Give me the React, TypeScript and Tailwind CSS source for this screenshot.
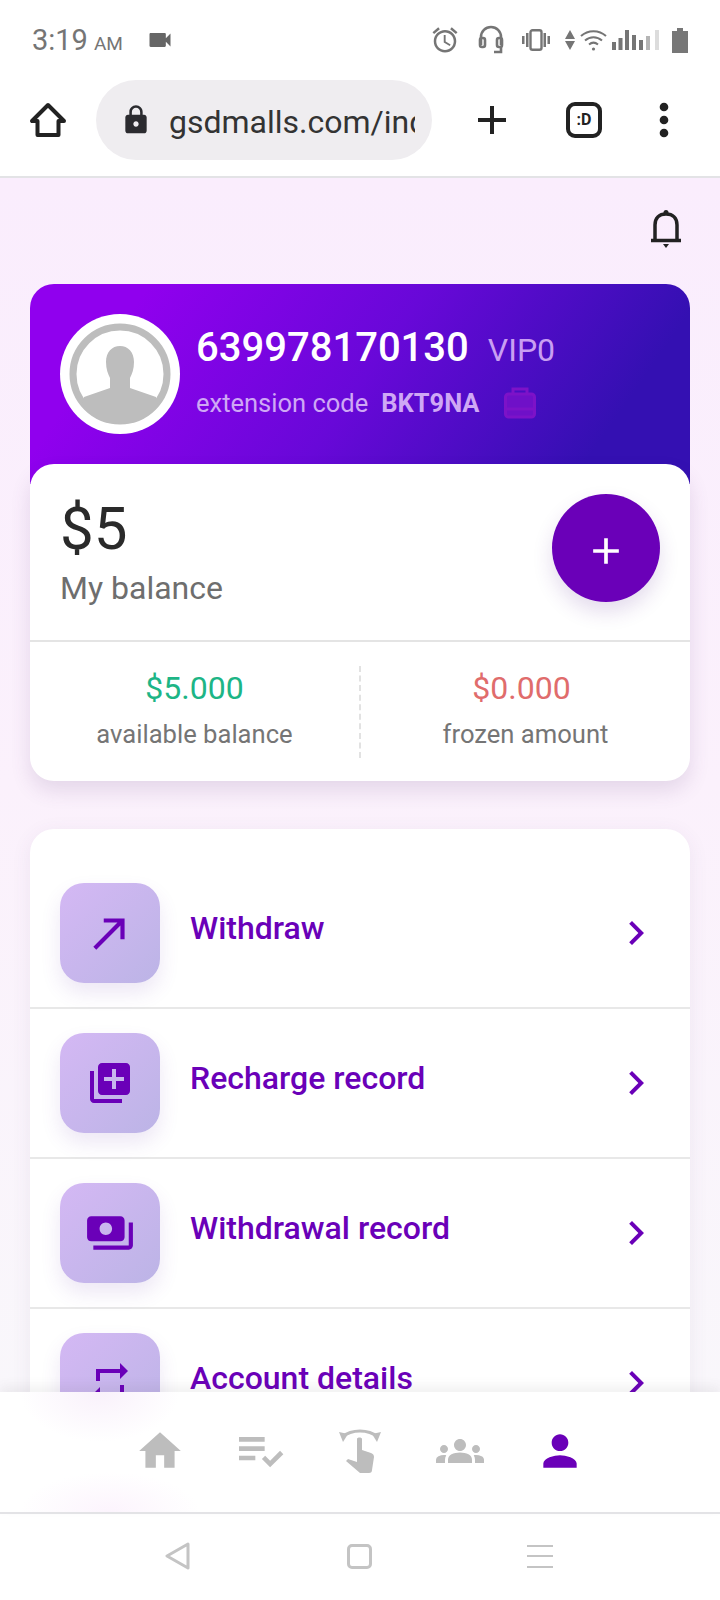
import React from "react";
import { MdNorthEast, MdLibraryAdd, MdPayments, MdRepeat, MdHome, MdPlaylistAddCheck, MdGroups, MdPerson, MdAccessAlarm, MdVideocam, MdLock, MdAdd, MdMoreVert, MdChevronRight } from "react-icons/md";

function Row({ label, icon, first }: { label: string; icon: React.ReactNode; first?: boolean }) {
  return (
    <div className={`flex items-center border-b-2 border-[#e8e8e8] pb-[24px] pl-[30px] pr-[30px] ${first ? "pt-[54px]" : "pt-[24px]"}`}>
      <div className="flex h-[100px] w-[100px] shrink-0 items-center justify-center rounded-[24px] bg-gradient-to-br from-[#d4b8f4] to-[#bcb4e6] text-[#6a00b8] shadow-[0_10px_20px_rgba(110,60,170,0.12)]">
        {icon}
      </div>
      <div className="ml-[30px] flex-1 pb-[10px] text-[32px] font-medium leading-[40px] text-[#6a00b8]">{label}</div>
      <MdChevronRight size={48} className="text-[#6a00b8]" />
    </div>
  );
}

export default function App() {
  return (
    <div className="flex h-[1600px] w-[720px] flex-col overflow-hidden bg-white font-['Roboto',sans-serif]">
      {/* status bar */}
      <div className="flex h-[78px] shrink-0 items-center pl-[32px] pr-[32px] pt-[2px] text-[#757575]">
        <span className="text-[29px] leading-none">3:19</span>
        <span className="ml-[6px] mt-[6px] text-[19px] leading-none">AM</span>
        <MdVideocam size={28} className="ml-[23px] text-[#666]" />
        <div className="ml-auto flex items-center">
          <MdAccessAlarm size={30} />
          <svg width="26" height="30" viewBox="0 0 26 30" className="ml-[18px]" fill="none" stroke="currentColor" strokeWidth="2.6">
            <path d="M3 20V12a10 10 0 0 1 20 0v8" />
            <rect x="2" y="13" width="5" height="9" rx="2" />
            <rect x="19" y="13" width="5" height="9" rx="2" />
            <path d="M23 22v5h-7" />
          </svg>
          <svg width="28" height="22" viewBox="0 0 28 22" className="ml-[18px]" fill="currentColor">
            <rect x="0" y="7" width="2.5" height="8" />
            <rect x="4" y="4" width="2.5" height="14" />
            <rect x="8.5" y="1.2" width="11" height="19.6" rx="2" fill="none" stroke="currentColor" strokeWidth="2.4" />
            <rect x="21.5" y="4" width="2.5" height="14" />
            <rect x="25.5" y="7" width="2.5" height="8" />
          </svg>
          <svg width="10" height="20" viewBox="0 0 10 20" className="ml-[15px]" fill="currentColor">
            <path d="M5 0l5 9H0zM0 11h10l-5 9z" />
          </svg>
          <svg width="27" height="22" viewBox="0 0 27 22" className="ml-[5px]" fill="none" stroke="currentColor" strokeWidth="2">
            <path d="M1 7c7-6.500 18-6.500 25 0M5 11.500c5-4.500 12-4.500 17 0M9 15.500c3-2.500 6-2.500 9 0" />
            <circle cx="13.500" cy="20" r="1.600" fill="currentColor" stroke="none" />
          </svg>
          <svg width="48" height="22" viewBox="0 0 48 22" className="ml-[5px]">
            <rect x="0" y="13" width="4" height="8" fill="#757575" />
            <rect x="6.500" y="9" width="4" height="12" fill="#757575" />
            <rect x="13" y="1" width="4" height="20" fill="#757575" />
            <rect x="20" y="6" width="4" height="15" fill="#757575" />
            <rect x="27" y="11" width="4" height="10" fill="#757575" />
            <rect x="34" y="7" width="4" height="14" fill="#b5b5b5" />
            <rect x="43" y="1" width="4" height="20" fill="#dcdcdc" />
          </svg>
          <svg width="16" height="25" viewBox="0 0 16 25" className="ml-[12px]" fill="#777">
            <rect x="5" y="0" width="6" height="3" />
            <rect x="0" y="3" width="16" height="22" />
          </svg>
        </div>
      </div>

      {/* browser bar */}
      <div className="flex h-[100px] shrink-0 items-start border-b-2 border-[#e3e3e6]">
        <svg width="38" height="36" viewBox="0 0 38 36" className="ml-[29px] mt-[24px]" fill="none" stroke="#222" strokeWidth="4" strokeLinejoin="round">
          <path d="M19 3L3 19h5.500v14h21V19H35z" />
        </svg>
        <div className="ml-[29px] mt-[2px] flex h-[80px] w-[336px] items-center rounded-full bg-[#efedf0] pl-[24px]">
          <MdLock size={32} className="shrink-0 text-[#2b2b2f]" />
          <div className="ml-[17px] mt-[3px] w-[246px] overflow-hidden whitespace-nowrap text-[32px] leading-[40px] text-[#333]">gsdmalls.com/index</div>
        </div>
        <MdAdd size={48} className="ml-[36px] mt-[18px] text-[#222]" />
        <div className="ml-[50px] mt-[24px] flex h-[36px] w-[36px] items-center justify-center rounded-[9px] border-[4px] border-[#222] text-[16px] font-bold leading-none text-[#222]">:D</div>
        <MdMoreVert size={52} className="ml-[36px] mt-[16px] text-[#222]" />
      </div>

      {/* page */}
      <div className="min-h-0 flex-1 overflow-hidden bg-gradient-to-b from-[#faedfd] via-[#fbf1fc] to-[#f9f7fb] px-[30px]">
        <div className="flex justify-end pr-[8px] pt-[32px]">
          <svg width="32" height="38" viewBox="0 0 32 38" fill="none" stroke="#222" strokeWidth="3.500">
            <path d="M5 29V15c0-7 4-11 11-11s11 4 11 11v14" />
            <path d="M1 30.500h30" strokeWidth="3.500" />
            <path d="M13 34h6l-3 4z" fill="#222" stroke="none" />
            <circle cx="16" cy="2.500" r="2.500" fill="#222" stroke="none" />
          </svg>
        </div>

        <div className="mt-[36px] h-[200px] rounded-t-[24px] bg-[linear-gradient(125deg,#9000ee_15%,#6808d8_50%,#3410b2_85%)] pl-[30px] pt-[30px]">
          <div className="flex">
            <div className="flex h-[120px] w-[120px] shrink-0 items-center justify-center rounded-full bg-white">
              <svg width="104" height="104" viewBox="0 0 104 104">
                <defs>
                  <clipPath id="av"><circle cx="52" cy="52" r="50" /></clipPath>
                </defs>
                <circle cx="52" cy="52" r="47" fill="#fff" stroke="#bdbdbd" strokeWidth="7" />
                <path clipPath="url(#av)" d="M52 24c8 0 14 6 14 16 0 7-2 12-4 16v10l26 9 8 31H8l8-31 26-9V56c-2-4-4-9-4-16 0-10 6-16 14-16z" fill="#bdbdbd" />
              </svg>
            </div>
            <div className="ml-[16px] min-w-0">
              <div className="mt-[10px] flex items-baseline leading-[48px]">
                <span className="text-[40px] font-medium text-white">639978170130</span>
                <span className="ml-[19px] text-[32px] text-[#c99ff2]">VIP0</span>
              </div>
              <div className="mt-[13px] flex items-center text-[25.500px] leading-[32px] text-[#cfa8f5]">
                <span>extension code</span>
                <span className="ml-[13px] font-bold">BKT9NA</span>
                <svg width="32" height="32" viewBox="0 0 32 32" className="ml-[24px]" fill="#6f10c8" stroke="#7d12c8" strokeWidth="3">
                  <path d="M9 7V2h14v5" fill="none" />
                  <rect x="1.500" y="7" width="29" height="23" rx="3" />
                  <path d="M1.500 22h29" />
                </svg>
              </div>
            </div>
          </div>
        </div>

        <div className="relative -mt-[20px] rounded-[24px] bg-white shadow-[0_10px_20px_rgba(90,60,120,0.14)]">
          <div className="flex h-[178px] items-start justify-between border-b-2 border-[#e4e4e4] pl-[30px] pr-[30px] pt-[30px]">
            <div>
              <div className="text-[60px] leading-[70px] text-[#2a2a2a]">$5</div>
              <div className="mt-[4px] text-[32px] leading-[40px] text-[#6e6e6e]">My balance</div>
            </div>
            <div className="flex h-[108px] w-[108px] items-center justify-center rounded-full bg-[#6a00b8] pt-[6px] shadow-[0_10px_20px_rgba(90,40,140,0.16)]">
              <MdAdd size={44} className="text-white" />
            </div>
          </div>
          <div className="flex h-[139px] items-center">
            <div className="flex h-[92px] flex-1 flex-col items-center">
              <div className="mt-[1px] text-[32px] leading-[42px] text-[#1db586]">$5.000</div>
              <div className="mt-[9px] text-[25.600px] leading-[32px] text-[#757575]">available balance</div>
            </div>
            <div className="h-[92px] w-0 border-l-2 border-dashed border-[#e2e2e2]" />
            <div className="flex h-[92px] flex-1 flex-col items-center">
              <div className="mt-[1px] pr-[8px] text-[32px] leading-[42px] text-[#e06c6c]">$0.000</div>
              <div className="mt-[9px] text-[25.600px] leading-[32px] text-[#757575]">frozen amount</div>
            </div>
          </div>
        </div>

        <div className="mt-[48px] rounded-t-[24px] bg-white shadow-[0_4px_20px_rgba(90,60,120,0.08)]">
          <Row first label="Withdraw" icon={<MdNorthEast size={50} />} />
          <Row label="Recharge record" icon={<MdLibraryAdd size={48} />} />
          <Row label="Withdrawal record" icon={<MdPayments size={50} />} />
          <Row label="Account details" icon={<MdRepeat size={48} />} />
        </div>
      </div>

      {/* bottom nav */}
      <div className="relative flex h-[122px] shrink-0 items-center justify-center border-b-2 border-[#e3e3e6] bg-white bg-[radial-gradient(ellipse_80px_50px_at_100px_0px,#f9f1fb,transparent),radial-gradient(ellipse_90px_40px_at_110px_120px,#fcf4fd,transparent)] pb-[2px] text-[#bdbdbd] shadow-[0_-6px_10px_rgba(90,90,90,0.08)]">
        <div className="flex h-[100px] w-[100px] items-center justify-center"><MdHome size={50} /></div>
        <div className="flex h-[100px] w-[100px] items-center justify-center"><MdPlaylistAddCheck size={56} /></div>
        <div className="flex h-[100px] w-[100px] items-center justify-center">
          <svg width="42" height="46" viewBox="0 0 42 46" fill="currentColor">
            <path d="M3 9c10-8 26-8 36 0" fill="none" stroke="currentColor" strokeWidth="3" />
            <path d="M0 4l9 2-5 8zM42 4l-9 2 5 8z" />
            <path d="M18 11c0-2 5-2 5 0v11l9 3c2 .7 3 2 3 4l-2 13c0 2-1 3-3 3H21L7 33l2-2 9 3z" />
          </svg>
        </div>
        <div className="flex h-[100px] w-[100px] items-center justify-center"><MdGroups size={48} /></div>
        <div className="flex h-[100px] w-[100px] items-center justify-center"><MdPerson size={50} className="text-[#6a00b8]" /></div>
      </div>

      {/* system nav */}
      <div className="flex h-[86px] shrink-0 items-center justify-between bg-white pb-[2px] pl-[165px] pr-[167px]">
        <svg width="26" height="28" viewBox="0 0 26 28" fill="none" stroke="#c4c4c4" strokeWidth="3" strokeLinejoin="round">
          <path d="M23 2L2 14l21 12z" />
        </svg>
        <div className="h-[25px] w-[25px] rounded-[5px] border-[3px] border-[#c4c4c4]" />
        <div className="flex h-[23px] w-[26px] flex-col justify-between">
          <div className="h-[2px] bg-[#c4c4c4]" />
          <div className="h-[2px] bg-[#c4c4c4]" />
          <div className="h-[2px] bg-[#c4c4c4]" />
        </div>
      </div>
    </div>
  );
}
